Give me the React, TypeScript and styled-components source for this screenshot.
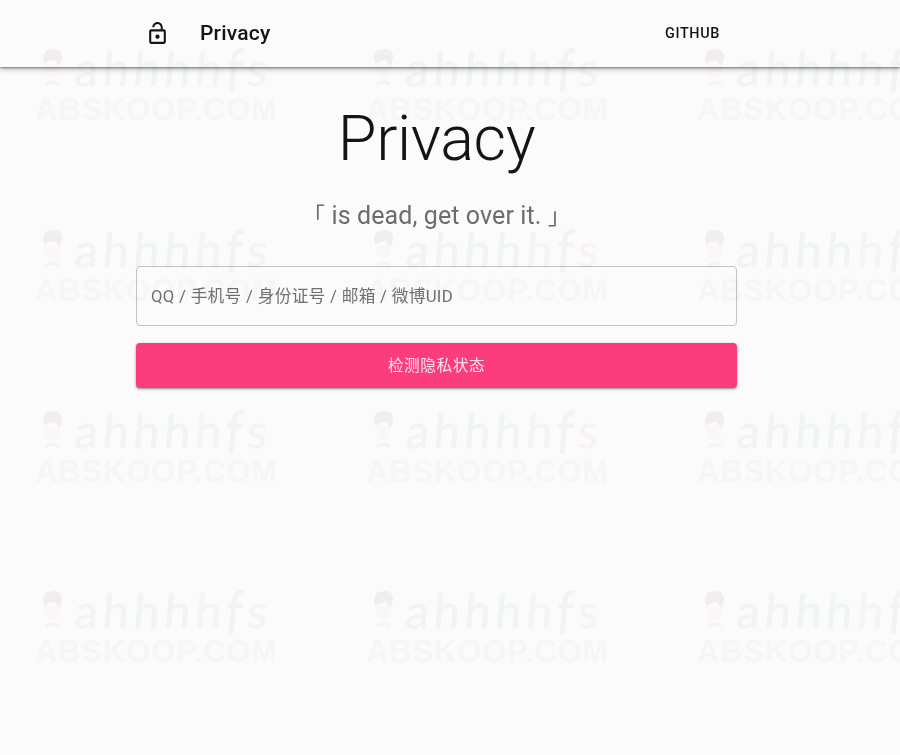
import { useState } from "react";
import styled, { createGlobalStyle } from "styled-components";
import { MdLockOpen } from "react-icons/md";

const GlobalStyle = createGlobalStyle`
  * {
    box-sizing: border-box;
  }
  body {
    margin: 0;
    background: #fbfbfb;
    color: #141414;
    font-family: Roboto, "Noto Sans CJK SC", sans-serif;
  }
`;

const Page = styled.div`
  position: relative;
  min-height: 755px;
  overflow: hidden;
  background: #fbfbfb;
`;

const AppBar = styled.header`
  height: 67px;
  background: #fbfbfb;
  box-shadow:
    0 1px 2px rgba(0, 0, 0, 0.42),
    0 2px 6px rgba(0, 0, 0, 0.26);
`;

const Toolbar = styled.div`
  display: flex;
  align-items: center;
  width: 601px;
  height: 66px;
  margin-left: 136px;
  padding: 0 17px 0 9px;
`;

const LockIcon = styled(MdLockOpen)`
  width: 25px;
  height: 25px;
  margin-right: 30px;
`;

const Brand = styled.span`
  flex: 1;
  font-size: 21px;
  font-weight: 500;
  line-height: 30px;
  letter-spacing: 0.2px;
`;

const NavLink = styled.a`
  color: inherit;
  font-size: 14.4px;
  font-weight: 500;
  letter-spacing: 0.65px;
  text-decoration: none;
`;

const Main = styled.main`
  width: 601px;
  margin-left: 136px;
  padding-top: 34px;
`;

const Title = styled.h1`
  margin: 0;
  font-size: 63px;
  font-weight: 300;
  line-height: 75px;
  letter-spacing: -0.4px;
  text-align: center;
`;

const Subtitle = styled.p`
  display: flex;
  align-items: center;
  justify-content: center;
  height: 37px;
  margin: 21px 0 32px;
  color: #6c6c6c;
  font-size: 25px;
  line-height: 37px;
  letter-spacing: 0.1px;
  white-space: pre;
`;

const Bracket = styled.span`
  font: 400 23px/35px "Noto Sans CJK SC", sans-serif;
  padding-bottom: 2px;
`;

const Form = styled.form`
  display: flex;
  flex-direction: column;
  gap: 17px;
`;

const Input = styled.input`
  width: 100%;
  height: 60px;
  padding: 0 14px;
  border: 1px solid #c2c2c2;
  border-radius: 4px;
  background: transparent;
  color: #141414;
  font: 400 16.7px Roboto, "Noto Sans CJK SC", sans-serif;
  letter-spacing: 0.3px;
  outline: none;
  &::placeholder {
    color: #707070;
    opacity: 1;
  }
`;

const Button = styled.button`
  width: 100%;
  height: 45px;
  padding: 0 0 4px;
  border: 0;
  border-radius: 4px;
  background: #fc3d7d;
  color: #ffe4ee;
  font: 400 15.6px Roboto, "Noto Sans CJK SC", sans-serif;
  letter-spacing: 0.6px;
  box-shadow:
    0 1px 2px rgba(0, 0, 0, 0.35),
    0 1px 4px rgba(0, 0, 0, 0.14);
  cursor: pointer;
`;

const Watermarks = styled.div`
  position: absolute;
  top: 43px;
  left: 35px;
  display: grid;
  grid-template-columns: repeat(3, 331px);
  grid-auto-rows: 180.8px;
  mix-blend-mode: multiply;
  pointer-events: none;
  user-select: none;
`;

const Mark = styled.div`
  width: 243px;
  color: #f7f7f7;
`;

const MarkTop = styled.div`
  display: flex;
  align-items: center;
  height: 50px;
`;

const Avatar = styled.svg`
  width: 26px;
  height: 44px;
  margin: 0 9px 0 5px;
`;

const MarkName = styled.span`
  font: 400 47px/48px Lato, sans-serif;
  letter-spacing: 4.6px;
  transform: skewX(-5deg);
  -webkit-text-stroke: 0.6px currentColor;
`;

const Tint = styled.span<{ $color: string }>`
  color: ${({ $color }) => $color};
`;

const TallLetter = styled.span`
  display: inline-block;
  transform: scaleY(1.25);
`;

const MarkDomain = styled.div`
  font: 700 31px/33px "Liberation Sans", sans-serif;
  letter-spacing: 0.85px;
  color: #fafafa;
  white-space: nowrap;
`;

const marks = Array.from({ length: 12 }, (_, i) => i);

function Watermark() {
  return (
    <Mark>
      <MarkTop>
        <Avatar viewBox="0 0 26 44">
          <path
            d="M3 14C3 6 7 3 11 4c5-3 12 1 11 8l-2 8c-3-1-3-5-6-6-4 1-7 1-9 4z"
            fill="#f6f1f2"
          />
          <path d="M4 18c0 9 4 14 9 14s8-6 7-13" fill="#fffbfb" />
          <path d="M6 39c4-4 10-4 13 0" fill="none" stroke="#f8f8f8" strokeWidth="3" />
        </Avatar>
        <MarkName>
          a<Tint $color="#f6f8f8">h</Tint>
          <Tint $color="#f3f9f8">hh</Tint>
          <Tint $color="#f6f9f9">h</Tint>
          <TallLetter>f</TallLetter>
          <Tint $color="#fcf6f7">s</Tint>
        </MarkName>
      </MarkTop>
      <MarkDomain>ABSKOOP.COM</MarkDomain>
    </Mark>
  );
}

export default function App() {
  const [value, setValue] = useState("");

  return (
    <>
      <GlobalStyle />
      <Page>
        <AppBar>
          <Toolbar>
            <LockIcon />
            <Brand>Privacy</Brand>
            <NavLink href="#">GITHUB</NavLink>
          </Toolbar>
        </AppBar>
        <Main>
          <Title>Privacy</Title>
          <Subtitle>
            <Bracket>「</Bracket> is dead, get over it. <Bracket>」</Bracket>
          </Subtitle>
          <Form onSubmit={(e) => e.preventDefault()}>
            <Input
              value={value}
              placeholder="QQ / 手机号 / 身份证号 / 邮箱 / 微博UID"
              onChange={(e) => setValue(e.target.value)}
            />
            <Button type="submit">检测隐私状态</Button>
          </Form>
        </Main>
        <Watermarks aria-hidden="true">
          {marks.map((i) => (
            <Watermark key={i} />
          ))}
        </Watermarks>
      </Page>
    </>
  );
}
